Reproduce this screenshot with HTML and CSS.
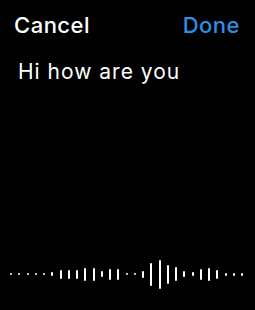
FILE: index.html
```html
<!DOCTYPE html>
<html lang="en">
<head>
    <meta charset="UTF-8">
    <meta name="viewport" content="width=device-width, initial-scale=1.0">
    <title>Dictation</title>
    <link rel="stylesheet" href="styles.css">
</head>
<body>
    <div class="screen">
        <div class="head">
            <span class="cancel">Cancel</span>
            <span class="done">Done</span>
        </div>
        <p class="message">Hi how are you</p>
        <div class="wave">
            <span style="height:2px"></span>
            <span style="height:2px"></span>
            <span style="height:2px"></span>
            <span style="height:2px"></span>
            <span style="height:2px"></span>
            <span style="height:4px"></span>
            <span style="height:9px"></span>
            <span style="height:9px"></span>
            <span style="height:9px"></span>
            <span style="height:13px"></span>
            <span style="height:13px"></span>
            <span style="height:6px"></span>
            <span style="height:11px"></span>
            <span style="height:11px"></span>
            <span style="height:2px"></span>
            <span style="height:2px"></span>
            <span style="height:7px"></span>
            <span style="height:23px"></span>
            <span style="height:29px"></span>
            <span style="height:19px"></span>
            <span style="height:14px"></span>
            <span style="height:6px"></span>
            <span style="height:4px"></span>
            <span style="height:11px"></span>
            <span style="height:13px"></span>
            <span style="height:9px"></span>
            <span style="height:3px"></span>
            <span style="height:3px"></span>
            <span style="height:3px"></span>
        </div>
    </div>
</body>
</html>
```

FILE: styles.css
```css
*{
    margin: 0;
    padding: 0;
    box-sizing: border-box;
}
body{
    background: #000;
    color: #fff;
    font-family: Inter, Roboto, sans-serif;
}
.screen{
    height: 310px;
    display: flex;
    flex-direction: column;
}
.head{
    display: flex;
    justify-content: space-between;
    padding: 11px 15px 0 14px;
    font-size: 22px;
    font-weight: 500;
    line-height: 28px;
    letter-spacing: 0.5px;
}
.done{
    color: #2f8fe2;
}
.message{
    padding: 21px 0 0 18px;
    font-size: 21px;
    line-height: 24px;
    letter-spacing: 1px;
}
.wave{
    margin-top: auto;
    height: 30px;
    margin-bottom: 21px;
    padding: 0 12px 0 10px;
    display: flex;
    justify-content: space-between;
    align-items: center;
}
.wave span{
    width: 2px;
    min-height: 2px;
    background: #fff;
    border-radius: 1px;
}
```
